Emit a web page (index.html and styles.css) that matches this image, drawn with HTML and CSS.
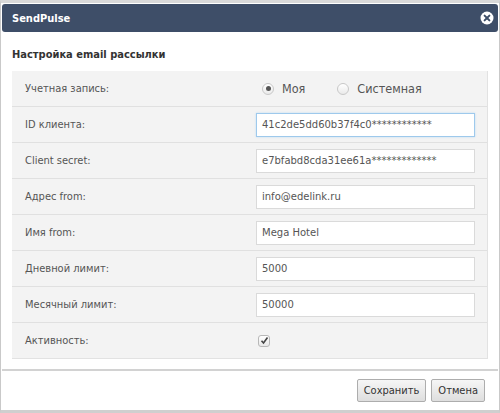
FILE: index.html
```html
<!DOCTYPE html>
<html>
<head>
<meta charset="utf-8">
<link rel="stylesheet" href="styles.css">
</head>
<body>
<div class="dialog">
  <div class="titlebar">
    <span class="title">SendPulse</span>
    <span class="close">
      <svg width="14" height="14" viewBox="0 0 14 14"><circle cx="7" cy="7" r="6.5" fill="#fff"/><path d="M4.6 4.6 L9.4 9.4 M9.4 4.6 L4.6 9.4" stroke="#3e4e68" stroke-width="2" stroke-linecap="round"/></svg>
    </span>
  </div>
  <div class="content">
    <h2 class="heading">Настройка email рассылки</h2>
    <div class="table">
      <div class="row">
        <div class="label">Учетная запись:</div>
        <div class="value radios">
          <label class="radio"><span class="dot checked"></span>Моя</label>
          <label class="radio"><span class="dot"></span>Системная</label>
        </div>
      </div>
      <div class="row">
        <div class="label">ID клиента:</div>
        <div class="value"><div class="input focus">41c2de5dd60b37f4c0************</div></div>
      </div>
      <div class="row">
        <div class="label">Client secret:</div>
        <div class="value"><div class="input">e7bfabd8cda31ee61a*************</div></div>
      </div>
      <div class="row">
        <div class="label">Адрес from:</div>
        <div class="value"><div class="input">info@edelink.ru</div></div>
      </div>
      <div class="row">
        <div class="label">Имя from:</div>
        <div class="value"><div class="input">Mega Hotel</div></div>
      </div>
      <div class="row">
        <div class="label">Дневной лимит:</div>
        <div class="value"><div class="input">5000</div></div>
      </div>
      <div class="row">
        <div class="label">Месячный лимит:</div>
        <div class="value"><div class="input">50000</div></div>
      </div>
      <div class="row last">
        <div class="label">Активность:</div>
        <div class="value"><span class="check"><svg width="9" height="9" viewBox="0 0 9 9"><path d="M1.5 4.8 L3.5 7 L7.5 1.5" fill="none" stroke="#444" stroke-width="1.6"/></svg></span></div>
      </div>
    </div>
  </div>
  <div class="footer">
    <button class="btn">Сохранить</button>
    <button class="btn">Отмена</button>
  </div>
</div>
</body>
</html>
```
FILE: styles.css
```css
html, body {
  margin: 0;
  padding: 0;
  background: #ffffff;
}
.dialog {
  width: 500px;
  height: 413px;
  box-sizing: border-box;
  border: 1px solid #c9c9c9;
  border-top: 3px solid #d9d9d9;
  border-bottom: 3px solid #cfcfcf;
  padding: 1px 1px 0 1px;
  font-family: "DejaVu Sans Condensed", "DejaVu Sans", Verdana, sans-serif;
  color: #555;
  display: flex;
  flex-direction: column;
}
.titlebar {
  height: 28px;
  background: #3e4e68;
  border-radius: 3px;
  display: flex;
  align-items: center;
  justify-content: space-between;
  padding: 0 4px 0 10px;
}
.title {
  color: #fff;
  font-weight: bold;
  font-size: 11px;
}
.close {
  display: flex;
}
.content {
  padding: 0 10px 0 10px;
  height: 337px;
}
.heading {
  margin: 16px 0 9px 0;
  font-size: 11px;
  font-weight: bold;
  color: #333;
  height: 14px;
  line-height: 14px;
}
.table {
  background: #f3f3f3;
  border-right: 1px solid #e2e2e2;
  border-bottom: 1px solid #e2e2e2;
}
.row {
  display: flex;
  align-items: center;
  height: 35px;
  border-bottom: 1px solid #e0e0e0;
}
.row.last {
  border-bottom: none;
  height: 35px;
}
.label {
  width: 244px;
  box-sizing: border-box;
  padding-left: 13px;
  font-size: 11px;
  color: #555;
}
.value {
  flex: 1;
  display: flex;
  align-items: center;
}
.input {
  width: 219px;
  height: 24px;
  box-sizing: border-box;
  border: 1px solid #dadada;
  background: #fff;
  font-family: "DejaVu Sans", Verdana, sans-serif;
  font-size: 10px;
  line-height: 22px;
  padding-left: 5px;
  color: #555;
  white-space: nowrap;
  overflow: hidden;
}
.input.focus {
  border-color: #9ec9ec;
  box-shadow: 0 0 2px #bfdcf3;
}
.radios {
  padding-left: 6px;
}
.radio {
  display: flex;
  align-items: center;
  font-size: 12.5px;
  color: #555;
  margin-right: 32px;
}
.dot {
  width: 12px;
  height: 12px;
  box-sizing: border-box;
  border: 1px solid #c8c8c8;
  border-radius: 50%;
  background: linear-gradient(#fff, #eaeaea);
  margin-right: 8px;
  position: relative;
}
.dot.checked::after {
  content: "";
  position: absolute;
  left: 2.5px;
  top: 2.5px;
  width: 5px;
  height: 5px;
  border-radius: 50%;
  background: #555;
}
.check {
  margin-left: 2px;
  width: 12px;
  height: 12px;
  box-sizing: border-box;
  border: 1px solid #b8b8b8;
  border-radius: 3px;
  background: linear-gradient(#fff, #e8e8e8);
  display: flex;
  align-items: center;
  justify-content: center;
}
.footer {
  border-top: 2px solid #d2d2d2;
  display: flex;
  justify-content: flex-end;
  align-items: center;
  gap: 5px;
  padding: 0 13px 0 0;
  flex: 1;
}
.btn {
  font-family: "DejaVu Sans Condensed", "DejaVu Sans", Verdana, sans-serif;
  font-size: 11px;
  color: #333;
  height: 23px;
  padding: 0 6px;
  border: 1px solid #adadad;
  border-radius: 2px;
  background: linear-gradient(#f6f6f6, #dedede);
}
```
